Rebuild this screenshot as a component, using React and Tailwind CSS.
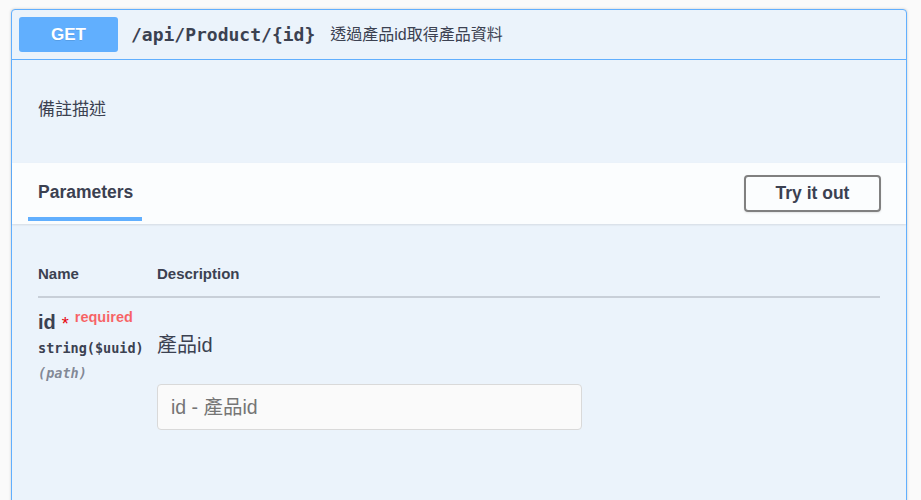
import React from 'react';

const sans = { fontFamily: '"Liberation Sans", "Noto Sans CJK TC", sans-serif' };
const mono = { fontFamily: '"DejaVu Sans Mono", "Liberation Mono", monospace' };

const App = () => {
    return (
        <div className="h-[500px] overflow-hidden bg-[#fafafa] pt-[9px] pl-[11px] text-[#3b4151]" style={sans}>
            <div className="w-[896px] h-[560px] rounded-[4px] border border-[#61affe] bg-[#ebf3fb] shadow-[0_0_3px_rgba(0,0,0,0.19)]">
                {/* summary */}
                <div className="flex items-center p-[7px] border-b border-[#61affe]">
                    <div className="w-[99px] h-[35px] rounded-[3px] bg-[#61affe] text-white font-bold text-[17px] flex items-center justify-center [text-shadow:0_1px_0_rgba(0,0,0,0.1)]">
                        GET
                    </div>
                    <span className="ml-[13px] text-[18px] font-bold" style={mono}>/api/Product/&#123;id&#125;</span>
                    <span className="ml-[15px] text-[16px] text-[#3b4151]">透過產品id取得產品資料</span>
                </div>

                {/* description */}
                <div className="h-[103px] flex items-center px-[26px] pb-[4px] text-[17px]">
                    備註描述
                </div>

                {/* section header */}
                <div className="h-[61px] bg-white/80 shadow-[0_1px_2px_rgba(0,0,0,0.1)] flex items-stretch justify-between pl-[16px] pr-[25px]">
                    <div className="flex flex-col justify-end">
                        <div className="px-[10px] pb-[12px] text-[17.5px] font-bold">Parameters</div>
                        <div className="h-[4px] w-[114px] bg-[#61affe] mb-[3px]" />
                    </div>
                    <div className="flex items-center">
                        <button className="w-[137px] h-[37px] rounded-[4px] border-2 border-[#808080] bg-transparent text-[17.5px] font-bold text-[#3b4151] shadow-[0_1px_2px_rgba(0,0,0,0.1)]">
                            Try it out
                        </button>
                    </div>
                </div>

                {/* parameters table */}
                <div className="px-[26px] pt-[40px]">
                    <div className="flex border-b-2 border-[#3b4151]/20 pb-[12px] text-[15px] font-bold leading-[20px]">
                        <div className="w-[119px]">Name</div>
                        <div>Description</div>
                    </div>
                    <div className="flex pt-[12px]">
                        <div className="w-[119px] flex flex-col">
                            <div className="flex items-start h-[24px]">
                                <span className="text-[20px] font-bold leading-[24px]">id</span>
                                <span className="ml-[6px] text-[18px] text-red-600 leading-[24px] pt-[2px]">*</span>
                                <span className="ml-[6px] text-[14.5px] text-[#ff0000]/60 font-bold leading-[16px] -mt-[1px]">required</span>
                            </div>
                            <div className="mt-[4px] text-[13.5px] font-bold leading-[20px]" style={mono}>string($uuid)</div>
                            <div className="mt-[5px] text-[13.5px] font-bold italic text-[#3b4151]/60 leading-[20px]" style={mono}>(path)</div>
                        </div>
                        <div className="flex flex-col pt-[21px]">
                            <div className="text-[20px] leading-[28px]">產品id</div>
                            <input
                                className="mt-[25px] w-[425px] h-[46px] rounded-[4px] border border-[#d9d9d9] bg-[#fafafa] px-[13px] text-[19.5px] outline-none placeholder:text-[#757575]"
                                style={sans}
                                placeholder="id - 產品id"
                            />
                        </div>
                    </div>
                </div>
            </div>
        </div>
    );
};

export default App;
